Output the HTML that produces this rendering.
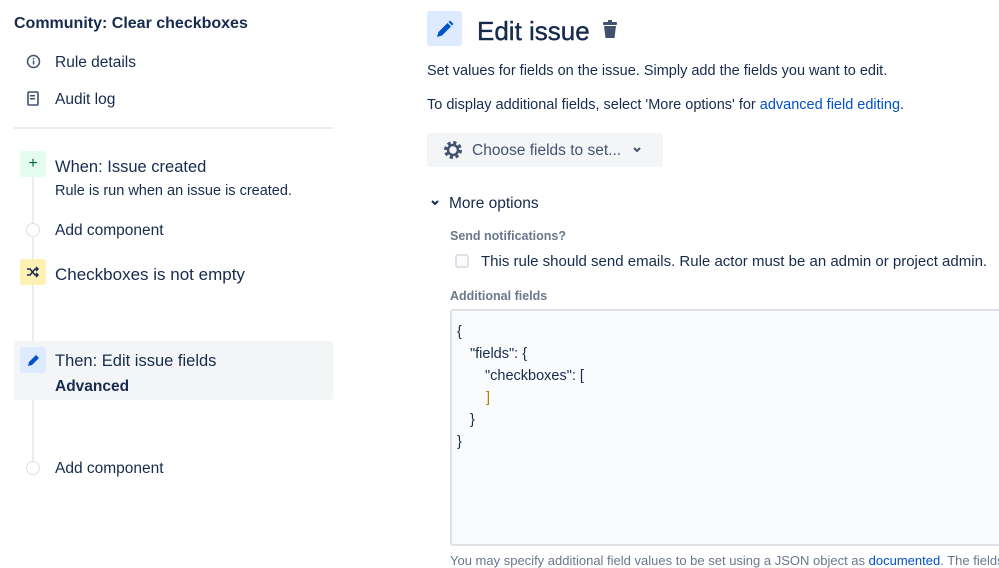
<!DOCTYPE html>
<html><head><meta charset="utf-8"><style>
*{margin:0;padding:0;box-sizing:border-box}
body{width:999px;height:560px;overflow:hidden;background:#fff;font-family:"Liberation Sans",sans-serif;color:#172b4d;position:relative}
.a{position:absolute;white-space:nowrap;line-height:1}
.ib{position:absolute;width:26px;height:26px;border-radius:3px;display:flex;align-items:center;justify-content:center}
</style></head><body>
<div class="a" style="left:14px;top:16px;font-size:16px;font-weight:bold">Community: Clear checkboxes</div>
<svg class="a" style="left:26px;top:54px" width="15" height="15" viewBox="0 0 15 15"><circle cx="7.5" cy="7.5" r="6" fill="none" stroke="#42526e" stroke-width="1.5"/><rect x="6.8" y="6.5" width="1.5" height="4" fill="#42526e"/><rect x="6.8" y="4" width="1.5" height="1.5" fill="#42526e"/></svg>
<div class="a" style="left:55px;top:55px;font-size:15.5px">Rule details</div>
<svg class="a" style="left:27px;top:91px" width="12" height="15" viewBox="0 0 12 15"><rect x="1" y="1" width="10" height="13" rx="1" fill="none" stroke="#42526e" stroke-width="1.6"/><rect x="3" y="4" width="5" height="1.5" fill="#42526e"/><rect x="3" y="7" width="5" height="1.5" fill="#42526e"/></svg>
<div class="a" style="left:55px;top:92px;font-size:15.5px">Audit log</div>
<div class="a" style="left:14px;top:127px;width:319px;height:2px;background:#ebecf0"></div>
<div class="a" style="left:32px;top:170px;width:2px;height:300px;background:#ebecf0"></div>
<div class="ib" style="left:20px;top:151px;background:#e3fcef;color:#006644;font-size:16px">+</div>
<div class="a" style="left:55px;top:159px;font-size:16.5px">When: Issue created</div>
<div class="a" style="left:55px;top:184px;font-size:14.5px">Rule is run when an issue is created.</div>
<div class="a" style="left:26px;top:223px;width:14px;height:14px;border:1.5px solid #dfe1e6;border-radius:50%;background:#fff"></div>
<div class="a" style="left:55px;top:223px;font-size:15.5px">Add component</div>
<div class="ib" style="left:20px;top:259px;background:#fff0b3"><svg width="14" height="12" viewBox="0 0 14 12"><path d="M1 3h3l5 6h3M1 9h3l5-6h3M10 1l2 2-2 2M10 7l2 2-2 2" fill="none" stroke="#172b4d" stroke-width="1.5"/></svg></div>
<div class="a" style="left:55px;top:266px;font-size:17px">Checkboxes is not empty</div>
<div class="a" style="left:14px;top:341px;width:319px;height:59px;background:#f4f5f7;border-radius:3px"></div>
<div class="ib" style="left:20px;top:347px;background:#deebff"><svg width="13" height="13" viewBox="0 0 13 13"><path d="M1 12l1-4 7-7 3 3-7 7z" fill="#0052cc"/></svg></div>
<div class="a" style="left:55px;top:353px;font-size:16.5px">Then: Edit issue fields</div>
<div class="a" style="left:55px;top:379px;font-size:15.5px;font-weight:bold">Advanced</div>
<div class="a" style="left:26px;top:461px;width:14px;height:14px;border:1.5px solid #dfe1e6;border-radius:50%;background:#fff"></div>
<div class="a" style="left:55px;top:461px;font-size:15.5px">Add component</div>

<div class="a" style="left:427px;top:11px;width:35px;height:35px;border-radius:3px;background:#deebff;display:flex;align-items:center;justify-content:center"><svg width="18" height="18" viewBox="0 0 18 18"><path d="M1 17l1.5-5 9-9 3.5 3.5-9 9z M12.5 2l1.5-1.5 3.5 3.5-1.5 1.5z" fill="#0052cc"/></svg></div>
<div class="a" style="left:477px;top:18px;font-size:26px;-webkit-text-stroke:0.4px #172b4d">Edit issue</div>
<svg class="a" style="left:601px;top:20px" width="18" height="19" viewBox="0 0 18 19"><rect x="2" y="2" width="14" height="3" rx="1" fill="#42526e"/><rect x="7" y="0" width="4" height="2" fill="#42526e"/><path d="M3 6h12l-1.5 12h-9z" fill="#42526e"/></svg>
<div class="a" style="left:427px;top:64px;font-size:14.5px">Set values for fields on the issue. Simply add the fields you want to edit.</div>
<div class="a" style="left:427px;top:98px;font-size:14.5px">To display additional fields, select 'More options' for <span style="color:#0052cc">advanced field editing</span>.</div>
<div class="a" style="left:427px;top:133px;width:236px;height:34px;background:#f4f5f7;border-radius:3px"></div>
<svg class="a" style="left:443px;top:140px" width="20" height="20" viewBox="0 0 20 20"><circle cx="10" cy="10" r="7" fill="none" stroke="#42526e" stroke-width="4" stroke-dasharray="3 2.5"/><circle cx="10" cy="10" r="5" fill="none" stroke="#42526e" stroke-width="2.5"/></svg>
<div class="a" style="left:472px;top:143px;font-size:15.5px;color:#42526e">Choose fields to set...</div>
<svg class="a" style="left:632px;top:146px" width="10" height="8" viewBox="0 0 10 8"><path d="M2 2l3 3 3-3" fill="none" stroke="#42526e" stroke-width="2"/></svg>
<svg class="a" style="left:430px;top:199px" width="10" height="8" viewBox="0 0 10 8"><path d="M2 2l3 3 3-3" fill="none" stroke="#172b4d" stroke-width="2"/></svg>
<div class="a" style="left:449px;top:196px;font-size:15.5px">More options</div>
<div class="a" style="left:450px;top:230px;font-size:12.5px;font-weight:bold;color:#6b778c">Send notifications?</div>
<div class="a" style="left:455px;top:254px;width:14px;height:14px;border:2px solid #dfe1e6;border-radius:3px;background:#fafbfc"></div>
<div class="a" style="left:481px;top:254px;font-size:15px">This rule should send emails. Rule actor must be an admin or project admin.</div>
<div class="a" style="left:450px;top:290px;font-size:12.5px;font-weight:bold;color:#6b778c">Additional fields</div>
<div class="a" style="left:450px;top:309px;width:560px;height:237px;background:#fafbfc;border:2px solid #dfe1e6;border-radius:3px"></div>
<div class="a" style="left:457px;top:321px;font-size:14.5px;line-height:22px">
<div>{</div>
<div style="padding-left:13px">"fields": {</div>
<div style="padding-left:28px">"checkboxes": [</div>
<div style="padding-left:29px;color:#b08000">]</div>
<div style="padding-left:13px">}</div>
<div>}</div>
</div>
<div class="a" style="left:450px;top:554px;font-size:13px;color:#6b778c">You may specify additional field values to be set using a JSON object as <span style="color:#0052cc">documented</span>. The fields</div>
</body></html>
